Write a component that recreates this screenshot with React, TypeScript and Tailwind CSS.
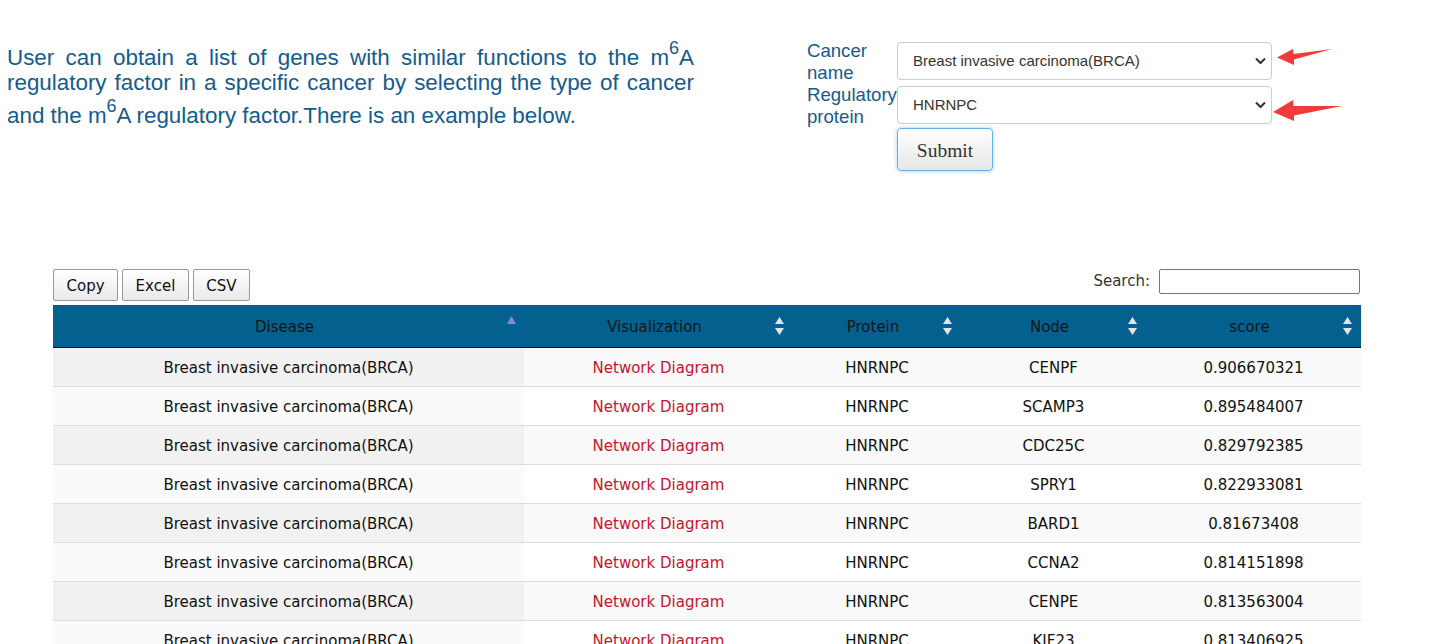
import React from "react";

const rows = [
  { node: "CENPF", score: "0.906670321" },
  { node: "SCAMP3", score: "0.895484007" },
  { node: "CDC25C", score: "0.829792385" },
  { node: "SPRY1", score: "0.822933081" },
  { node: "BARD1", score: "0.81673408" },
  { node: "CCNA2", score: "0.814151898" },
  { node: "CENPE", score: "0.813563004" },
  { node: "KIF23", score: "0.813406925" },
];

const cols = "grid grid-cols-[471px_269px_168px_185px_215px]";

function SortBoth() {
  return (
    <svg width="9" height="18" viewBox="0 0 9 18" className="absolute right-[9px] top-[12px]">
      <path d="M4.5 0 L9 7 L0 7 Z" fill="#e4e4e4" />
      <path d="M4.5 18 L9 11 L0 11 Z" fill="#e4e4e4" />
    </svg>
  );
}

function SortAsc() {
  return (
    <svg width="9" height="8" viewBox="0 0 9 8" className="absolute right-[8px] top-[11px]">
      <path d="M4.5 0 L9 8 L0 8 Z" fill="#8a84e0" />
    </svg>
  );
}

function Chevron() {
  return (
    <svg
      width="11"
      height="7"
      viewBox="0 0 11 7"
      className="pointer-events-none absolute right-[6px] top-1/2 -translate-y-1/2"
    >
      <polyline points="1,1 5.5,5.5 10,1" fill="none" stroke="#333" strokeWidth="2" />
    </svg>
  );
}

function Header({ label, asc }: { label: string; asc?: boolean }) {
  return (
    <div className="relative flex h-[43px] items-center justify-center border-b border-[#111] pl-[10px] pr-[18px] pt-[3px] text-[15px] text-[#151515]">
      {label}
      {asc ? <SortAsc /> : <SortBoth />}
    </div>
  );
}

function Sup() {
  return <sup className="relative top-0 align-[10.5px] text-[18px] leading-[1.15]">6</sup>;
}

export default function App() {
  return (
    <div className="relative h-[644px] overflow-hidden bg-white">
      <div className="flex items-start pt-[39px]">
        <p className="ml-[7px] mt-[-1px] w-[687px] text-justify font-['Arial','Liberation_Sans',sans-serif] text-[22.4px] leading-[1.15] text-[#135c8d]">
          User can obtain a list of genes with similar functions to the m<Sup />A regulatory factor in a specific
          cancer by selecting the type of cancer and the m<Sup />A regulatory factor.There is an example below.
        </p>

        <form className="ml-[113px] grid grid-cols-[90px_375px] font-['Arial','Liberation_Sans',sans-serif]">
          <label className="flex h-[44px] items-center pt-[1px] text-[18.6px] leading-[22px] text-[#135c8d]">Cancer name</label>
          <div className="relative flex items-center">
            <select className="h-[38px] w-full appearance-none rounded-[4px] border border-[#ccc] bg-white pl-[15px] text-[15px] text-[#333]">
              <option>Breast invasive carcinoma(BRCA)</option>
            </select>
            <Chevron />
          </div>
          <label className="flex h-[44px] items-center pt-[1px] text-[18.6px] leading-[22px] text-[#135c8d]">
            Regulatory protein
          </label>
          <div className="relative flex items-center">
            <select className="h-[38px] w-full appearance-none rounded-[4px] border border-[#ccc] bg-white pl-[15px] text-[15px] text-[#333]">
              <option>HNRNPC</option>
            </select>
            <Chevron />
          </div>
          <div />
          <div className="pt-[1px]">
            <button
              type="button"
              className="h-[43px] w-[96px] rounded-[4px] border border-[#66afe9] bg-gradient-to-b from-white to-[#e6e6e6] pt-[2px] font-['Liberation_Serif',serif] text-[19.5px] text-[#333] shadow-[0_0_4px_rgba(102,175,233,0.6)]"
            >
              Submit
            </button>
          </div>
        </form>
      </div>

      <svg width="90" height="90" viewBox="0 0 90 90" className="absolute left-[1260px] top-[40px]">
        <path d="M17 17.5 L33 9 L33.5 14 L72 9 L34 19.5 L34 25 Z" fill="#f23a3a" />
        <path d="M13 72 L33 60 L33.5 66 L82 66 L34 75.5 L34 81 Z" fill="#f23a3a" />
      </svg>

      <div className="ml-[53px] mt-[98px] w-[1308px] font-['DejaVu_Sans',Verdana,sans-serif]">
        <div className="flex items-start justify-between">
          <div className="flex gap-[4px]">
            {["Copy", "Excel", "CSV"].map((b) => (
              <button
                key={b}
                type="button"
                className="h-[32px] rounded-[2px] border border-[#999] bg-gradient-to-b from-white to-[#e9e9e9] px-[12.5px] pt-[2px] text-[15px] text-[#111]"
              >
                {b}
              </button>
            ))}
          </div>
          <label className="mr-[1px] flex h-[25px] items-center gap-[9px] text-[15px] text-[#333]">
            Search:
            <input className="h-[25px] w-[201px] rounded-[2px] border border-[#767676] bg-white" />
          </label>
        </div>

        <div className={`${cols} mt-[4px] bg-[#03608f]`}>
          <Header label="Disease" asc />
          <Header label="Visualization" />
          <Header label="Protein" />
          <Header label="Node" />
          <Header label="score" />
        </div>

        {rows.map((r, i) => {
          const odd = i % 2 === 0;
          return (
            <div
              key={r.node}
              className={`${cols} h-[39px] border-b border-[#ddd] text-[15px] text-[#111] ${odd ? "bg-[#f9f9f9]" : "bg-white"}`}
            >
              <div className={`flex items-center justify-center pt-[2px] ${odd ? "bg-[#f1f1f1]" : "bg-[#fafafa]"}`}>
                Breast invasive carcinoma(BRCA)
              </div>
              <div className="flex items-center justify-center pt-[2px]">
                <a href="#" className="text-[#c9132e]">
                  Network Diagram
                </a>
              </div>
              <div className="flex items-center justify-center pt-[2px]">HNRNPC</div>
              <div className="flex items-center justify-center pt-[2px]">{r.node}</div>
              <div className="flex items-center justify-center pt-[2px]">{r.score}</div>
            </div>
          );
        })}
      </div>
    </div>
  );
}
